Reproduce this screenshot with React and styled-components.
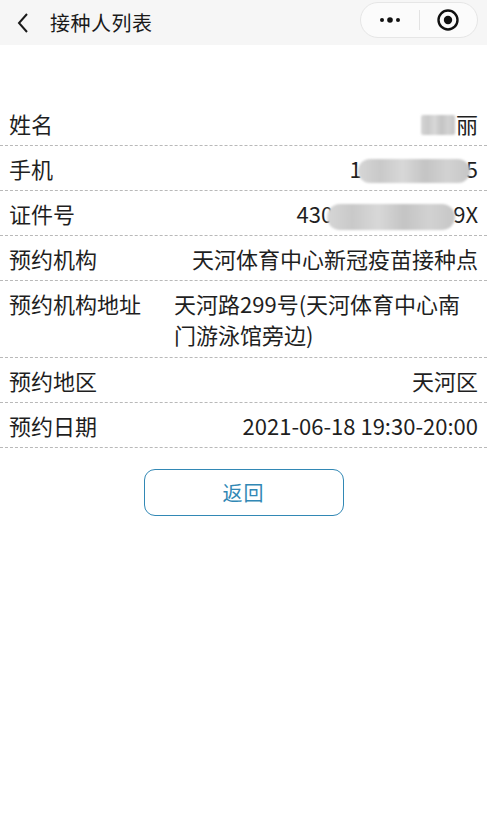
import React from 'react';
import styled, { createGlobalStyle } from 'styled-components';

const GlobalStyle = createGlobalStyle`
	html, body {
		margin: 0;
		padding: 0;
		background: #ffffff;
	}

	body {
		font-family: 'Noto Sans CJK SC', 'Noto Sans', sans-serif;
		color: #1f1f1f;
	}
`;

const Page = styled.div`
	width: 487px;
	min-height: 835px;
	background: #ffffff;
`;

const NavBar = styled.div`
	height: 45px;
	background: #f6f6f6;
	display: flex;
	align-items: center;
	padding: 0 9px 0 12px;
	box-sizing: border-box;
`;

const BackButton = styled.div`
	width: 22px;
	height: 22px;
	display: flex;
	align-items: center;
	justify-content: center;
	margin-right: 16px;
`;

const Title = styled.div`
	font-size: 20px;
	color: #1a1a1a;
	letter-spacing: 0.5px;
	flex: 1;
`;

const Capsule = styled.div`
	width: 118px;
	height: 36px;
	border: 1px solid #e6e6e6;
	border-radius: 19px;
	background: #fbfbfb;
	display: flex;
	align-items: center;
	box-sizing: border-box;
	margin-top: -6px;
`;

const CapsuleHalf = styled.div`
	flex: 1;
	height: 100%;
	display: flex;
	align-items: center;
	justify-content: center;
`;

const CapsuleDivider = styled.div`
	width: 1px;
	height: 20px;
	background: #e3e3e3;
`;

const List = styled.div`
	margin-top: 56px;
`;

const Row = styled.div`
	display: flex;
	align-items: flex-start;
	justify-content: space-between;
	height: ${(p) => (p.$tall ? '76px' : '44px')};
	box-sizing: content-box;
	padding: 0 9px;
	border-bottom: 1px dashed #b9b9b9;
	font-size: 22px;
	line-height: 30px;
	overflow: hidden;
`;

const Label = styled.div`
	flex-shrink: 0;
	margin-right: ${(p) => (p.$wide ? '33px' : '20px')};
	padding-top: 7px;
	color: #1f1f1f;
`;

const Value = styled.div`
	text-align: ${(p) => (p.$left ? 'left' : 'right')};
	color: #1f1f1f;
	flex: ${(p) => (p.$left ? '1' : '0 1 auto')};
	white-space: ${(p) => (p.$left ? 'normal' : 'nowrap')};
	line-height: ${(p) => (p.$left ? '31px' : '30px')};
	padding-top: 7px;
`;

const Blur = styled.span`
	display: inline-block;
	vertical-align: middle;
	width: ${(p) => p.$w}px;
	height: ${(p) => p.$h}px;
	margin: ${(p) => p.$m || '0'};
	border-radius: ${(p) => p.$r || '2px'};
	background: linear-gradient(
		90deg,
		#d6d6d6 0%,
		#c9c9c9 20%,
		#d8d8d8 40%,
		#c4c4c4 60%,
		#d2d2d2 80%,
		#c6c6c6 100%
	);
	filter: blur(1px);
`;

const Footer = styled.div`
	display: flex;
	justify-content: center;
	margin-top: 21px;
`;

const BackLink = styled.button`
	width: 200px;
	height: 47px;
	border: 1.5px solid #3288b5;
	border-radius: 11px;
	background: #ffffff;
	color: #3288b5;
	font-family: 'Noto Sans CJK SC', sans-serif;
	font-size: 20px;
	letter-spacing: 1px;
	cursor: pointer;
`;

const rows = [
	{ label: '姓名', value: <><Blur $w={34} $h={20} $m="0 1px 4px 0" />丽</> },
	{ label: '手机', value: <>1<Blur $w={112} $h={24} $r="12px" $m="0 -4px 2px -4px" />5</> },
	{ label: '证件号', value: <>430<Blur $w={128} $h={26} $r="13px" $m="0 -2px 0 -6px" />9X</> },
	{ label: '预约机构', value: '天河体育中心新冠疫苗接种点' },
	{ label: '预约机构地址', value: '天河路299号(天河体育中心南门游泳馆旁边)', wide: true },
	{ label: '预约地区', value: '天河区' },
	{ label: '预约日期', value: '2021-06-18 19:30-20:00' },
];

const App = () => {
	return (
		<>
			<GlobalStyle />
			<Page>
				<NavBar>
					<BackButton>
						<svg width="14" height="22" viewBox="0 0 14 22">
							<polyline points="11,2 3,11 11,20" fill="none" stroke="#1a1a1a" strokeWidth="2" />
						</svg>
					</BackButton>
					<Title>接种人列表</Title>
					<Capsule>
						<CapsuleHalf>
							<svg width="22" height="8" viewBox="0 0 22 8">
								<circle cx="3" cy="4" r="2" fill="#111" />
								<circle cx="11" cy="4" r="2.8" fill="#111" />
								<circle cx="19" cy="4" r="2" fill="#111" />
							</svg>
						</CapsuleHalf>
						<CapsuleDivider />
						<CapsuleHalf>
							<svg width="24" height="24" viewBox="0 0 24 24">
								<circle cx="12" cy="12" r="9.5" fill="none" stroke="#111" strokeWidth="2.4" />
								<circle cx="12" cy="12" r="4.2" fill="#111" />
							</svg>
						</CapsuleHalf>
					</Capsule>
				</NavBar>

				<List>
					{rows.map((r) => (
						<Row key={r.label} $tall={r.wide}>
							<Label $wide={r.wide}>{r.label}</Label>
							<Value $left={r.wide}>{r.value}</Value>
						</Row>
					))}
				</List>

				<Footer>
					<BackLink>返回</BackLink>
				</Footer>
			</Page>
		</>
	);
};

export default App;
